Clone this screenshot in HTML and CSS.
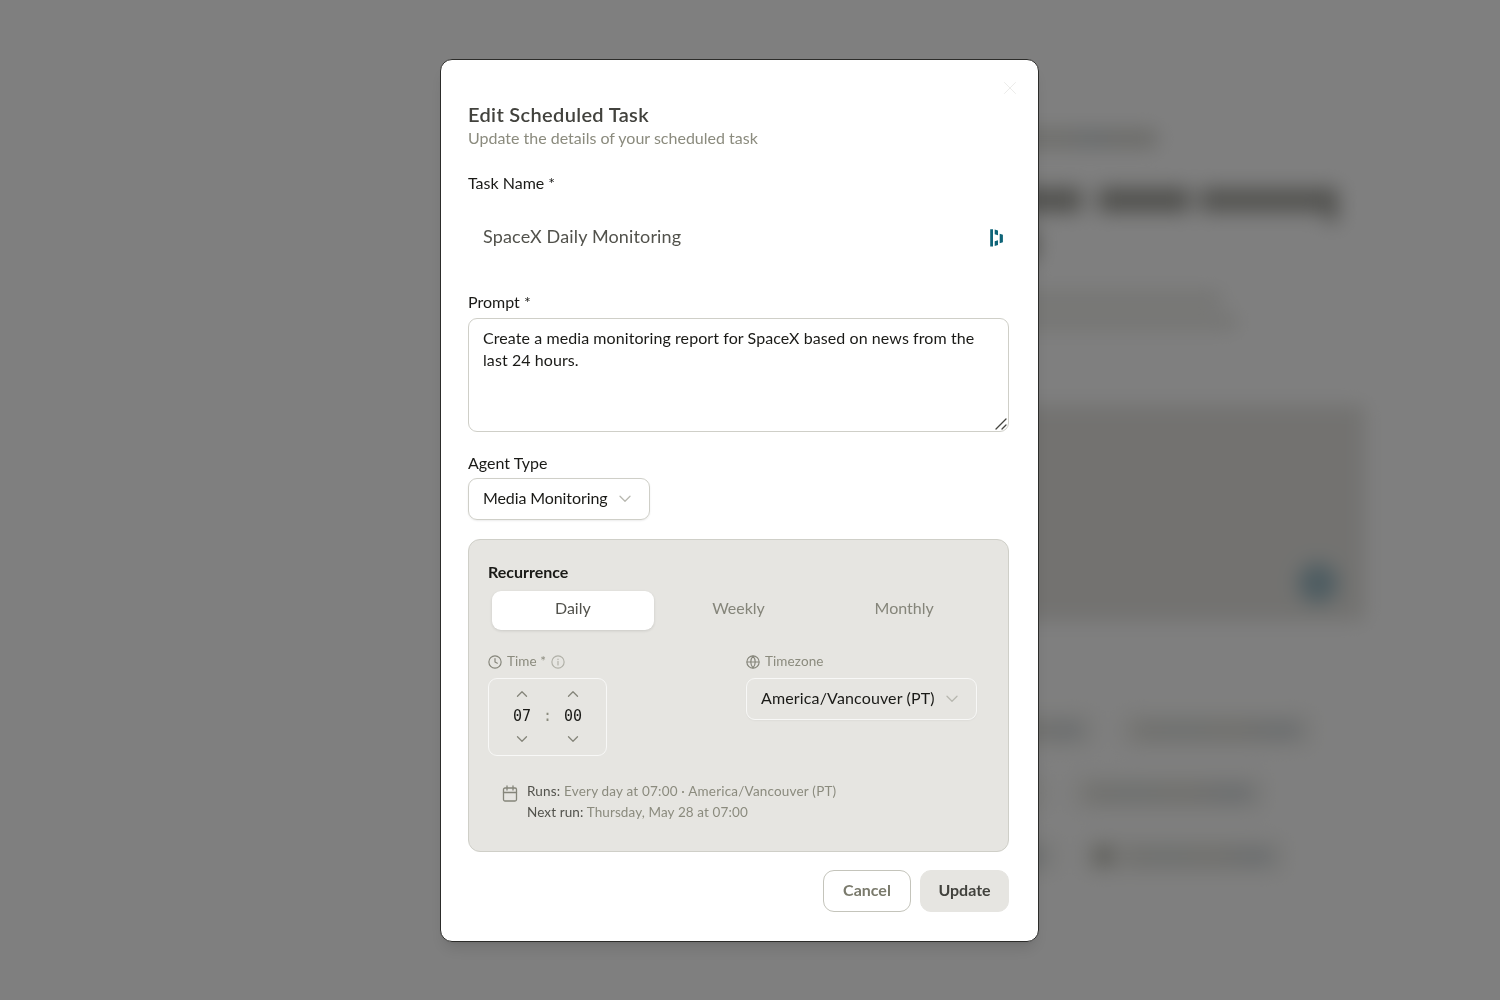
FILE: index.html
```
<!DOCTYPE html>
<html lang="en">
<head>
  <meta charset="UTF-8" />
  <meta name="viewport" content="width=device-width, initial-scale=1.0" />
  <title>Scheduled Tasks</title>
  <link rel="stylesheet" href="styles.css">
</head>
<body>
  <div class="page" aria-hidden="true">
    <div class="crumb"><span></span></div>
    <div class="headline"><span class="w1"></span><span class="w2"></span><span class="w3"></span><span class="tail"></span></div>
    <div class="headline-end"></div>
    <div class="intro"><span></span><span></span></div>
    <div class="composer"><div class="send"></div></div>
    <div class="chips">
      <div class="chip-row"><div class="chip c1"><i></i></div><div class="chip c2"><i></i></div></div>
      <div class="chip-row"><div class="chip c3"></div><div class="chip c4"><i></i></div></div>
      <div class="chip-row"><div class="chip c5"><i></i></div><div class="chip c6"><b></b><i></i></div></div>
    </div>
  </div>

  <div class="overlay">
    <div class="modal" role="dialog">
      <button class="close" aria-label="Close">
        <svg viewBox="0 0 14 14"><path d="M1.5 1.5l11 11M12.5 1.5l-11 11"/></svg>
      </button>

      <div class="modal-header">
        <h2>Edit Scheduled Task</h2>
        <p>Update the details of your scheduled task</p>
      </div>

      <label class="label">Task Name *</label>
      <div class="name-input">
        <span>SpaceX Daily Monitoring</span>
        <svg class="logo" viewBox="0 0 14 18"><path d="M1.2 0.2h2.8v17.3H1.200zM5.700 0.600l3.300 1v4.600l-3.300-1zM5.700 12.300l3.300-1v4.800l-3.300 1zM10.700 4.800l3.200 1v7.400l-3.200 1z"/></svg>
      </div>

      <label class="label">Prompt *</label>
      <div class="prompt">
        Create a media monitoring report for SpaceX based on news from the last 24 hours.
        <svg class="grip" viewBox="0 0 12 12"><path d="M1 11L11 1M7 11l4-4"/></svg>
      </div>

      <label class="label">Agent Type</label>
      <div class="select agent">
        <span>Media Monitoring</span>
        <svg class="chev" viewBox="0 0 12 8"><path d="M1 1.2l5 5 5-5"/></svg>
      </div>

      <div class="recurrence">
        <h3>Recurrence</h3>
        <div class="tabs">
          <div class="tab active">Daily</div>
          <div class="tab">Weekly</div>
          <div class="tab">Monthly</div>
        </div>

        <div class="when">
          <div>
            <div class="small-label">
              <svg viewBox="0 0 24 24"><circle cx="12" cy="12" r="10.5"/><path d="M12 6v6l4 2"/></svg>
              <span>Time *</span>
              <svg class="info" viewBox="0 0 24 24"><circle cx="12" cy="12" r="10.5"/><path d="M12 17v-6M12 7v.5"/></svg>
            </div>
            <div class="time-box">
              <div class="spin">
                <svg viewBox="0 0 12 8"><path d="M1.5 6.2L6 1.8l4.5 4.4"/></svg>
                <span>07</span>
                <svg viewBox="0 0 12 8"><path d="M1.5 1.8L6 6.2l4.5-4.4"/></svg>
              </div>
              <div class="colon">:</div>
              <div class="spin">
                <svg viewBox="0 0 12 8"><path d="M1.5 6.2L6 1.8l4.5 4.4"/></svg>
                <span>00</span>
                <svg viewBox="0 0 12 8"><path d="M1.5 1.8L6 6.2l4.5-4.4"/></svg>
              </div>
            </div>
          </div>
          <div>
            <div class="small-label">
              <svg viewBox="0 0 24 24"><circle cx="12" cy="12" r="10.5"/><path d="M2 12h20M12 2a15 15 0 0 0 0 20 15 15 0 0 0 0-20"/></svg>
              <span>Timezone</span>
            </div>
            <div class="select timezone">
              <span>America/Vancouver (PT)</span>
              <svg class="chev" viewBox="0 0 12 8"><path d="M1 1.2l5 5 5-5"/></svg>
            </div>
          </div>
        </div>

        <div class="summary">
          <svg viewBox="0 0 16 18"><rect x="1.5" y="3" width="13" height="13" rx="1.5"/><path d="M1.5 7.5h13M5 1v4M11 1v4"/></svg>
          <div>
            <p class="runs"><b>Runs:</b> Every day at 07:00 · America/Vancouver (PT)</p>
            <p><b>Next run:</b> Thursday, May 28 at 07:00</p>
          </div>
        </div>
      </div>

      <div class="actions">
        <button class="btn cancel">Cancel</button>
        <button class="btn update">Update</button>
      </div>
    </div>
  </div>
</body>
</html>
```
FILE: styles.css
```
* { box-sizing: border-box; }

body {
  margin: 0;
  height: 1000px;
  overflow: hidden;
  background: #ffffff;
  color: #1a1a17;
  font-family: Lato, 'Liberation Sans', sans-serif;
  font-size: 16px;
}

h2, h3, p { margin: 0; }

/* page behind the dialog */
.page {
  height: 1000px;
  padding: 130px 0 0 940px;
  filter: blur(10px);
}

.crumb span {
  display: block;
  width: 217px;
  height: 17px;
  background: linear-gradient(90deg, #d8d8d2 60%, #ccd4d8 70%, #d4d4ce 80%);
}

.headline {
  display: flex;
  align-items: flex-start;
  height: 64px;
  padding-top: 41px;
}

.headline span { height: 24px; background: #a0a09a; }
.headline .w1 { width: 142px; }
.headline .w2 { width: 92px; margin-left: 16px; }
.headline .w3 { width: 126px; margin-left: 10px; background: #a6a6a0; }
.headline .tail { width: 12px; height: 34px; }

.headline-end {
  width: 98px;
  height: 28px;
  margin-top: 20px;
  background: #b4b4ae;
}

.intro { padding-top: 33px; }

.intro span {
  display: block;
  width: 282px;
  height: 14px;
  margin-bottom: 9px;
  background: #e6e6e1;
}

.intro span + span { width: 297px; }

.composer {
  display: flex;
  align-items: flex-end;
  justify-content: flex-end;
  width: 425px;
  height: 216px;
  margin-top: 76px;
  padding: 18px 27px;
  background: #e6e5e1;
}

.send {
  width: 40px;
  height: 40px;
  border-radius: 50%;
  background: #9dbac4;
}

.chips { padding-top: 89px; }

.chip-row {
  display: flex;
  gap: 20px;
  margin-bottom: 23px;
}

.chip {
  display: flex;
  align-items: center;
  height: 40px;
  padding: 0 16px;
  border-radius: 12px;
  background: #f6f6f3;
}

.chip i {
  flex: 1;
  height: 13px;
  background: linear-gradient(90deg, #dcdad4, #d4dad8 30%, #dcdad2 60%, #cdd3d8 85%);
}

.chip b {
  width: 16px;
  height: 16px;
  margin-right: 12px;
  background: #a5a59b;
}

.c1 { width: 158px; }
.c2 { width: 198px; }
.c3 { width: 110px; }
.c4 { width: 198px; }
.c5 { width: 120px; }
.c6 { width: 208px; }

/* dialog */
.overlay {
  position: fixed;
  inset: 0;
  display: flex;
  align-items: center;
  justify-content: center;
  padding: 1px 21px 0 0;
  background: rgba(0, 0, 0, 0.5);
}

.modal {
  position: relative;
  width: 599px;
  height: 883px;
  padding: 42px 29px 28px 27px;
  background: #ffffff;
  border: 1px solid #2c2c2a;
  border-radius: 12px;
  box-shadow: 0 10px 15px -3px rgba(0, 0, 0, 0.1), 0 4px 6px -4px rgba(0, 0, 0, 0.1);
}

.close {
  position: absolute;
  top: 21px;
  right: 21px;
  padding: 0;
  border: none;
  background: none;
}

.close svg {
  display: block;
  width: 14px;
  height: 14px;
}

svg {
  flex: none;
  fill: none;
  stroke: #85857a;
  stroke-width: 1.3;
  stroke-linecap: round;
  stroke-linejoin: round;
}

.close svg { stroke: #ececea; stroke-width: 1; }

.modal-header h2 {
  font-size: 20px;
  font-weight: 600;
  line-height: 24px;
  letter-spacing: 0.34px;
  color: #42423d;
}

.modal-header p {
  padding-top: 1px;
  margin-bottom: 22px;
  line-height: 22px;
  color: #8b8b7e;
}

.label {
  display: block;
  line-height: 24px;
}

.name-input {
  display: flex;
  align-items: center;
  justify-content: space-between;
  height: 76px;
  margin-bottom: 19px;
  padding: 6px 6px 0 15px;
  font-size: 18px;
  letter-spacing: 0.15px;
  color: #52524c;
}

.logo {
  width: 14px;
  height: 18px;
  margin-top: 4px;
  fill: #0e6478;
  stroke: none;
}

.prompt {
  position: relative;
  height: 114px;
  margin: 4px 0 19px;
  padding: 8px 14px;
  border: 1px solid #cfcfc8;
  border-radius: 9px;
  line-height: 22.3px;
  letter-spacing: 0.08px;
}

.grip {
  position: absolute;
  right: 1px;
  bottom: 1px;
  width: 12px;
  height: 12px;
  stroke: #44443f;
}

.select {
  display: flex;
  align-items: center;
  justify-content: space-between;
  height: 42px;
  padding: 0 18px 4px 14px;
  border: 1px solid #cfcfc8;
  border-radius: 9px;
  box-shadow: 0 1px 2px rgba(0, 0, 0, 0.08);
}

.agent {
  width: 182px;
  margin-top: 3px;
  letter-spacing: -0.1px;
}

.chev {
  width: 12px;
  height: 8px;
  margin-top: 4px;
  stroke: #b8b8b0;
}

.recurrence {
  height: 313px;
  margin-top: 19px;
  padding: 20px 19px;
  background: #e6e5e1;
  border: 1px solid #cfcfc8;
  border-radius: 12px;
}

.recurrence h3 {
  font-size: 16px;
  font-weight: 700;
  line-height: 24px;
}

.tabs {
  display: grid;
  grid-template-columns: repeat(3, 1fr);
  gap: 4px;
  padding: 7px 4px 0;
}

.tab {
  height: 39px;
  border-radius: 9px;
  line-height: 34px;
  text-align: center;
  color: #85857a;
}

.tab.active {
  background: #ffffff;
  color: #52524c;
  box-shadow: 0 1px 3px rgba(0, 0, 0, 0.12);
}

.when {
  display: grid;
  grid-template-columns: 1fr 1fr;
  gap: 15px;
  margin-top: 21px;
}

.small-label {
  display: flex;
  align-items: center;
  gap: 5px;
  height: 20px;
  margin-bottom: 7px;
  font-size: 13.5px;
  letter-spacing: 0.1px;
  color: #8b8b7e;
}

.small-label svg {
  width: 14px;
  height: 14px;
  margin-top: 1px;
  stroke-width: 2;
}

.small-label .info { stroke: #b0b0a7; }

.time-box {
  display: flex;
  align-items: center;
  justify-content: center;
  width: 119px;
  height: 78px;
  padding-bottom: 2px;
  border: 1px solid #f8f8f7;
  border-radius: 9px;
  font-family: 'DejaVu Sans Mono', monospace;
  font-size: 15px;
}

.spin {
  display: flex;
  flex-direction: column;
  align-items: center;
  gap: 8.5px;
  width: 36px;
  line-height: 20px;
}

.spin svg {
  width: 12px;
  height: 8px;
}

.colon {
  width: 15px;
  text-align: center;
  color: #8b8b7e;
}

.timezone {
  width: 231px;
  border-color: #f8f8f7;
  box-shadow: 0 1px 2px rgba(0, 0, 0, 0.04);
  letter-spacing: 0.14px;
}

.summary {
  display: flex;
  gap: 9px;
  margin-top: 25px;
  padding-left: 14px;
  font-size: 13.5px;
  line-height: 21.2px;
  letter-spacing: 0.11px;
  color: #8b8b7e;
}

.summary .runs { letter-spacing: 0.19px; }

.summary svg {
  width: 16px;
  height: 18px;
  margin-top: 4px;
}

.summary b {
  font-weight: 400;
  color: #52524c;
}

.actions {
  display: flex;
  justify-content: flex-end;
  gap: 9px;
  margin-top: 18px;
}

.btn {
  width: 89px;
  height: 42px;
  padding: 0 0 3px;
  border: 1px solid #e6e5e1;
  border-radius: 11px;
  background: #e6e5e1;
  font: 700 16px Lato, sans-serif;
  color: #42423d;
}

.cancel {
  width: 88px;
  border-color: #c4c4bb;
  background: #ffffff;
  color: #7a7a6c;
}
```
